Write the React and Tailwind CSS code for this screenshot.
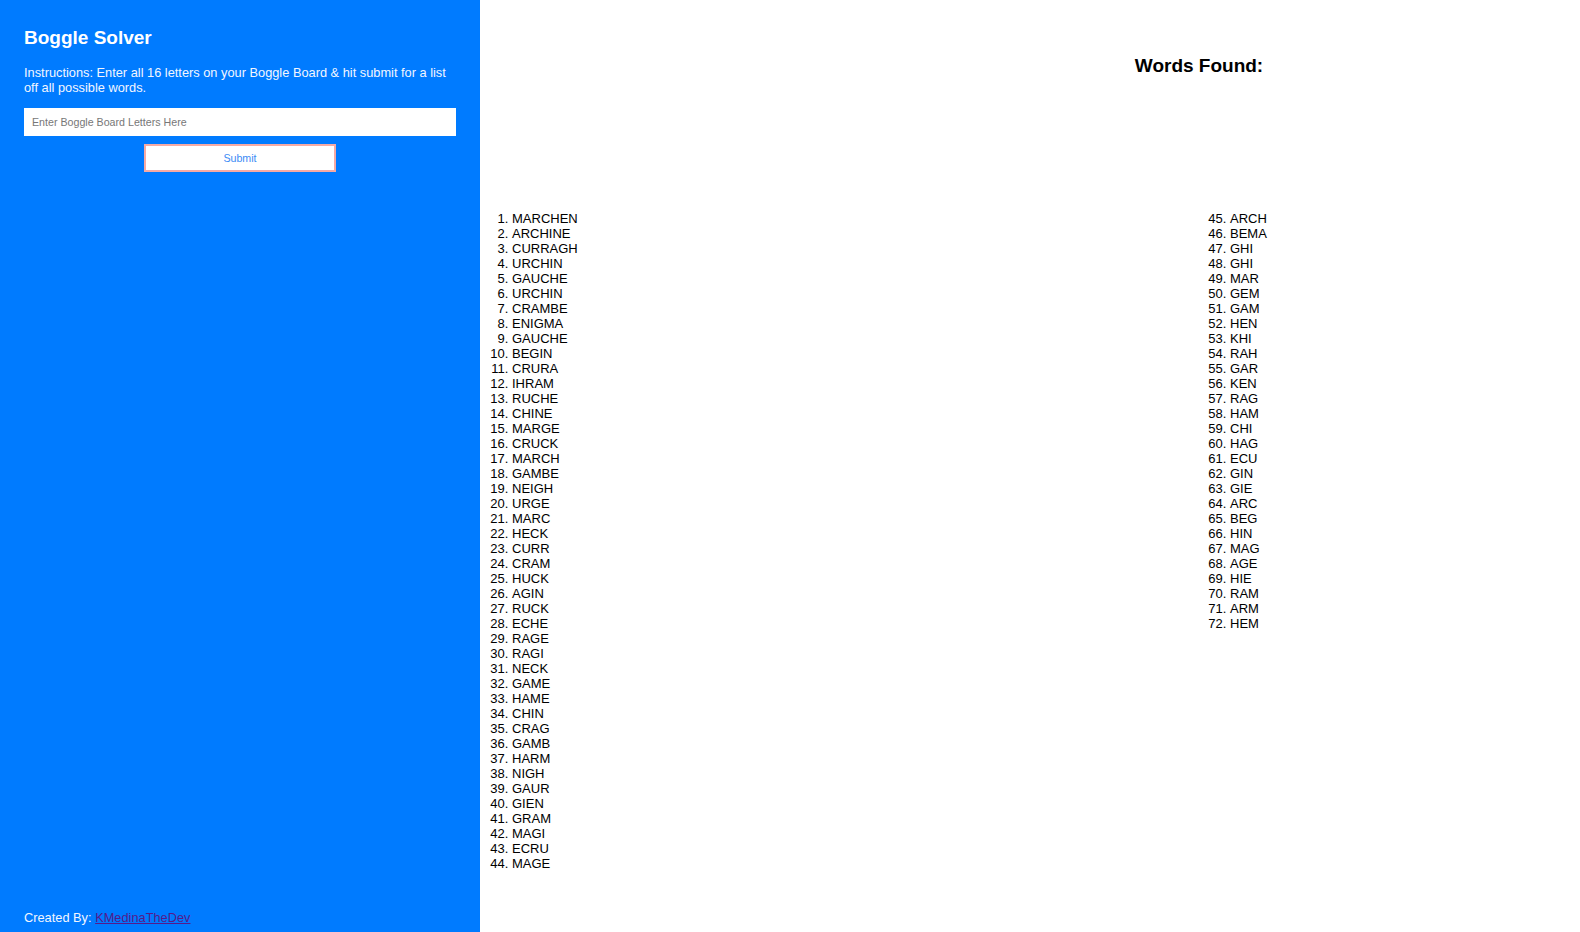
import React from "react";

const words = [
  "MARCHEN","ARCHINE","CURRAGH","URCHIN","GAUCHE","URCHIN","CRAMBE","ENIGMA","GAUCHE","BEGIN",
  "CRURA","IHRAM","RUCHE","CHINE","MARGE","CRUCK","MARCH","GAMBE","NEIGH","URGE",
  "MARC","HECK","CURR","CRAM","HUCK","AGIN","RUCK","ECHE","RAGE","RAGI",
  "NECK","GAME","HAME","CHIN","CRAG","GAMB","HARM","NIGH","GAUR","GIEN",
  "GRAM","MAGI","ECRU","MAGE",
  "ARCH","BEMA","GHI","GHI","MAR","GEM","GAM","HEN","KHI","RAH",
  "GAR","KEN","RAG","HAM","CHI","HAG","ECU","GIN","GIE","ARC",
  "BEG","HIN","MAG","AGE","HIE","RAM","ARM","HEM",
];

const first = words.slice(0, 44);
const second = words.slice(44);

export default function App() {
  return (
    <div
      className="flex h-[932px] w-[1580px] overflow-hidden bg-white"
      style={{ fontFamily: '"Liberation Sans", Arial, sans-serif' }}
    >
      <aside className="flex w-[480px] shrink-0 flex-col bg-[#007bff] px-6 pt-[27px] pb-[7px] text-white">
        <h1 className="text-[19px] font-bold leading-[22px]">Boggle Solver</h1>
        <p className="mt-[16px] text-[12.8px] leading-[15px] text-[#f2f6ff]">
          Instructions: Enter all 16 letters on your Boggle Board &amp; hit submit for a list off all possible words.
        </p>
        <input
          className="mt-[13px] h-[28px] w-full bg-white px-2 text-[10.67px] text-black outline-none placeholder:text-[#777]"
          placeholder="Enter Boggle Board Letters Here"
        />
        <div className="mt-2 flex justify-center">
          <button className="h-[28px] w-[192px] border-2 border-[#f6aaa4] bg-white text-[10.67px] text-[#3d8cf5]">
            Submit
          </button>
        </div>
        <div className="mt-auto text-[12.8px] leading-[15px] text-[#f2f6ff]">
          Created By:{" "}
          <a href="#" className="text-[#551a8b] underline">
            KMedinaTheDev
          </a>
        </div>
      </aside>
      <main className="flex flex-1 flex-col">
        <h2 className="pt-[55px] pl-[338px] text-center text-[19px] font-bold leading-[22px] text-black">
          Words Found:
        </h2>
        <div className="mt-[134px] flex text-[13px] leading-[15px] text-black">
          <ol className="w-[718px] list-decimal pl-[32px]">
            {first.map((w, i) => (
              <li key={i}>{w}</li>
            ))}
          </ol>
          <ol className="list-decimal pl-[32px]" start={45}>
            {second.map((w, i) => (
              <li key={i}>{w}</li>
            ))}
          </ol>
        </div>
      </main>
    </div>
  );
}
